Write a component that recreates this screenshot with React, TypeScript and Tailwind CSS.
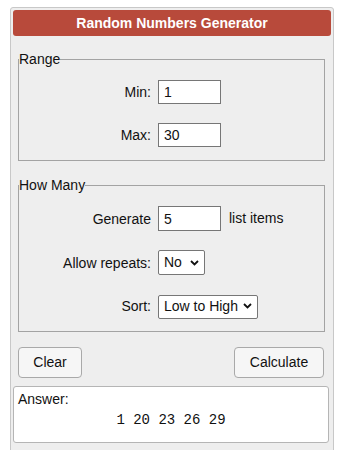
import { useState } from "react";

const labelCls = "w-[139px] shrink-0 text-right pr-[7px] text-[14px] leading-[24px]";

function Chevron() {
  return (
    <svg width="9" height="6" viewBox="0 0 9 6" className="pointer-events-none absolute right-[6px] top-1/2 -translate-y-1/2">
      <path d="M1 1 L4.5 4.5 L8 1" fill="none" stroke="#111" strokeWidth="1.8" />
    </svg>
  );
}

export default function App() {
  const [min, setMin] = useState("1");
  const [max, setMax] = useState("30");
  const [count, setCount] = useState("5");
  const [repeats, setRepeats] = useState("No");
  const [sort, setSort] = useState("Low to High");

  return (
    <div className="min-h-screen bg-white pt-[7px] pl-[10px] text-[#111]" style={{ fontFamily: '"Liberation Sans", Arial, sans-serif' }}>
      <div className="w-[324px] rounded-[3px] border border-[#c8c8c8] bg-[#eeeeee] p-[2px] pb-[20px]">
        {/* Header */}
        <div className="h-[26px] rounded-[3px] bg-[#b84a3b] text-center text-[14px] font-bold leading-[26px] text-white">
          Random Numbers Generator
        </div>

        {/* Range */}
        <fieldset className="ml-[5px] mr-[6px] mt-[15px] border border-[#a3a3a3] pt-[13px] pb-[13px]">
          <legend className="text-[14px] leading-[16px]">Range</legend>
          <div className="flex flex-col gap-[19px]">
            <div className="flex items-center">
              <span className={labelCls}>Min:</span>
              <input value={min} onChange={(e) => setMin(e.target.value)} className="h-[24px] w-[63px] border border-[#767676] bg-white pl-[5px] text-[14px]" />
            </div>
            <div className="flex items-center">
              <span className={labelCls}>Max:</span>
              <input value={max} onChange={(e) => setMax(e.target.value)} className="h-[24px] w-[63px] border border-[#767676] bg-white pl-[5px] text-[14px]" />
            </div>
          </div>
        </fieldset>

        {/* How Many */}
        <fieldset className="ml-[5px] mr-[6px] mt-[16px] border border-[#a3a3a3] pt-[13px] pb-[12px]">
          <legend className="text-[14px] leading-[16px]">How Many</legend>
          <div className="flex flex-col gap-[19px]">
            <div className="flex items-center">
              <span className={labelCls}>Generate</span>
              <input value={count} onChange={(e) => setCount(e.target.value)} className="h-[25px] w-[63px] border border-[#767676] bg-white pl-[5px] text-[14px]" />
              <span className="ml-[8px] text-[14px]">list items</span>
            </div>
            <div className="flex items-center">
              <span className={labelCls}>Allow repeats:</span>
              <div className="relative">
                <select value={repeats} onChange={(e) => setRepeats(e.target.value)} className="h-[25px] w-[47px] appearance-none rounded-[2px] border border-[#767676] bg-white pl-[5px] text-[14px]">
                  <option>No</option>
                  <option>Yes</option>
                </select>
                <Chevron />
              </div>
            </div>
            <div className="flex items-center">
              <span className={labelCls}>Sort:</span>
              <div className="relative">
                <select value={sort} onChange={(e) => setSort(e.target.value)} className="h-[24px] w-[100px] appearance-none rounded-[2px] border border-[#767676] bg-white pl-[5px] text-[14px]">
                  <option>Low to High</option>
                  <option>High to Low</option>
                  <option>None</option>
                </select>
                <Chevron />
              </div>
            </div>
          </div>
        </fieldset>

        {/* Buttons */}
        <div className="ml-[5px] mr-[7px] mt-[15px] flex justify-between">
          <button className="h-[31px] w-[64px] rounded-[4px] border border-[#a9a9a9] bg-[#f6f6f6] text-[14px]">Clear</button>
          <button className="h-[31px] w-[90px] rounded-[4px] border border-[#a9a9a9] bg-[#f6f6f6] text-[14px]">Calculate</button>
        </div>

        {/* Answer */}
        <div className="ml-0 mr-[2px] mt-[8px] h-[57px] rounded-[3px] border border-[#b5b5b5] bg-white px-[4px] pt-[4px]">
          <div className="text-[14px] leading-[16px]">Answer:</div>
          <div className="mt-[5px] text-center text-[14px] leading-[16px]" style={{ fontFamily: '"Liberation Mono", "Courier New", monospace' }}>
            1 20 23 26 29
          </div>
        </div>
      </div>
    </div>
  );
}
